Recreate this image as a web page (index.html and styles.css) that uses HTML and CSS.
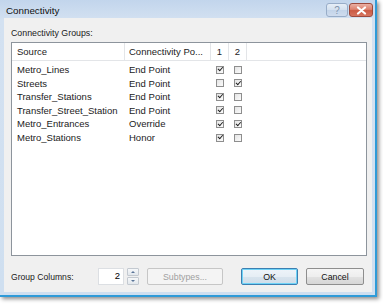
FILE: index.html
```html
<!DOCTYPE html>
<html lang="en">
<head>
    <meta charset="UTF-8">
    <title>Connectivity</title>
    <link rel="stylesheet" href="styles.css">
</head>
<body>
    <div class="window">
        <div class="titlebar">
            <span class="title">Connectivity</span>
            <div class="caption-btns">
                <div class="cap-btn help">?</div>
                <div class="cap-btn close">
                    <svg width="11" height="9" viewBox="0 0 11 9"><path d="M2 1.5 L9 7.5 M9 1.5 L2 7.5" stroke="#fff" stroke-width="2.2" stroke-linecap="round"/></svg>
                </div>
            </div>
        </div>

        <div class="client">
            <div class="group-label">Connectivity Groups:</div>

            <div class="listview">
                <div class="lv-row lv-header">
                    <div class="col c-source">Source</div>
                    <div class="col c-rule">Connectivity Po...</div>
                    <div class="col c-g">1</div>
                    <div class="col c-g">2</div>
                    <div class="col c-fill"></div>
                </div>
                <div class="lv-body">
                    <div class="lv-row">
                        <div class="col c-source">Metro_Lines</div>
                        <div class="col c-rule">End Point</div>
                        <div class="col c-g"><span class="cb checked"></span></div>
                        <div class="col c-g"><span class="cb"></span></div>
                    </div>
                    <div class="lv-row">
                        <div class="col c-source">Streets</div>
                        <div class="col c-rule">End Point</div>
                        <div class="col c-g"><span class="cb"></span></div>
                        <div class="col c-g"><span class="cb checked"></span></div>
                    </div>
                    <div class="lv-row">
                        <div class="col c-source">Transfer_Stations</div>
                        <div class="col c-rule">End Point</div>
                        <div class="col c-g"><span class="cb checked"></span></div>
                        <div class="col c-g"><span class="cb"></span></div>
                    </div>
                    <div class="lv-row">
                        <div class="col c-source">Transfer_Street_Station</div>
                        <div class="col c-rule">End Point</div>
                        <div class="col c-g"><span class="cb checked"></span></div>
                        <div class="col c-g"><span class="cb"></span></div>
                    </div>
                    <div class="lv-row">
                        <div class="col c-source">Metro_Entrances</div>
                        <div class="col c-rule">Override</div>
                        <div class="col c-g"><span class="cb checked"></span></div>
                        <div class="col c-g"><span class="cb checked"></span></div>
                    </div>
                    <div class="lv-row">
                        <div class="col c-source">Metro_Stations</div>
                        <div class="col c-rule">Honor</div>
                        <div class="col c-g"><span class="cb checked"></span></div>
                        <div class="col c-g"><span class="cb"></span></div>
                    </div>
                </div>
            </div>

            <div class="footer">
                <span class="footer-label">Group Columns:</span>
                <div class="spinner">
                    <div class="spin-value">2</div>
                    <div class="spin-btns">
                        <div class="spin-btn up"></div>
                        <div class="spin-btn down"></div>
                    </div>
                </div>
                <button class="btn btn-disabled subtypes">Subtypes...</button>
                <button class="btn btn-default ok">OK</button>
                <button class="btn cancel">Cancel</button>
            </div>
        </div>
    </div>
</body>
</html>
```

FILE: styles.css
```css
* {
    margin: 0;
    padding: 0;
    box-sizing: border-box;
    font-family: 'Liberation Sans', Arial, sans-serif;
}

body {
    background-color: #ffffff;
    width: 383px;
    height: 305px;
    overflow: hidden;
}

.window {
    width: 377px;
    height: 297px;
    background: linear-gradient(to bottom, #c2d5ec 0%, #d3e1f1 20px, #cfdff0 100%);
    border-right: 2px solid #2f9bd8;
    border-bottom: 2px solid #2f9bd8;
    box-shadow: 2px 2px 4px rgba(0, 0, 0, 0.45);
    display: flex;
    flex-direction: column;
}

.titlebar {
    height: 18px;
    display: flex;
    align-items: flex-start;
    justify-content: space-between;
    padding: 0 2px 0 6px;
}

.title {
    font-size: 9.8px;
    color: #111;
    line-height: 21px;
}

.caption-btns {
    display: flex;
    gap: 1px;
    margin-top: 3px;
}

.cap-btn {
    height: 14px;
    border-radius: 3px;
    display: flex;
    align-items: center;
    justify-content: center;
}

.help {
    width: 22px;
    border: 1px solid #98adc8;
    background: linear-gradient(to bottom, #e6eef7 0%, #d3e0ef 50%, #c3d4e9 51%, #cfdcee 100%);
    color: #8194ad;
    font-size: 10px;
}

.close {
    width: 24px;
    border: 1px solid #9c4a3d;
    background: linear-gradient(to bottom, #eab0a4 0%, #dc826f 45%, #cb5a43 55%, #d77560 100%);
}

.client {
    flex: 1;
    margin: 0 3px 3px 4px;
    background-color: #f0f0f0;
    padding: 9px 5px 0 7px;
    display: flex;
    flex-direction: column;
}

.group-label {
    font-size: 8.8px;
    color: #1a1a1a;
    line-height: 12px;
    margin-bottom: 3px;
}

.listview {
    height: 214px;
    background-color: #fff;
    border: 1px solid #8d949c;
}

.lv-row {
    display: flex;
    height: 13.6px;
    align-items: center;
    font-size: 9.5px;
    color: #1b1b1b;
}

.lv-header {
    height: 18px;
    border-bottom: 1px solid #e3e5e8;
    align-items: stretch;
}

.lv-header .col {
    display: flex;
    align-items: center;
    border-right: 1px solid #e3e5e8;
}

.lv-header .c-fill {
    flex: 1;
    border-right: none;
}

.lv-body {
    padding-top: 1.8px;
}

.col {
    white-space: nowrap;
    overflow: hidden;
}

.c-source {
    width: 113px;
    padding-left: 5px;
}

.c-rule {
    width: 86px;
    padding-left: 4px;
}

.c-g {
    width: 18px;
    display: flex;
    justify-content: center;
}

.lv-header .c-g {
    justify-content: center;
}

.cb {
    width: 8px;
    height: 8px;
    border: 1px solid #8e8e8e;
    background: linear-gradient(135deg, #e4e4e4, #fbfbfb);
    display: block;
    position: relative;
}

.cb.checked::after {
    content: "";
    position: absolute;
    left: 1.6px;
    top: -0.3px;
    width: 2px;
    height: 3.6px;
    border-right: 1.8px solid #1a1a1a;
    border-bottom: 1.8px solid #1a1a1a;
    transform: rotate(42deg);
}

.footer {
    display: flex;
    align-items: center;
    margin-top: 12px;
    height: 17px;
}

.footer-label {
    font-size: 8.6px;
    color: #1a1a1a;
    width: 87px;
}

.spinner {
    display: flex;
    gap: 3px;
    height: 17px;
}

.spin-value {
    width: 26px;
    background-color: #fff;
    border: 1px solid #dcdfe3;
    font-size: 9.5px;
    text-align: right;
    padding-right: 3px;
    line-height: 14px;
}

.spin-btns {
    width: 12px;
    display: flex;
    flex-direction: column;
    gap: 1px;
}

.spin-btn {
    flex: 1;
    border: 1px solid #c3c9d0;
    background: linear-gradient(to bottom, #f6f8fa, #e2e7ec);
    border-radius: 1px;
    display: flex;
    align-items: center;
    justify-content: center;
}

.spin-btn::after {
    content: "";
    border-left: 2.5px solid transparent;
    border-right: 2.5px solid transparent;
}

.spin-btn.up::after {
    border-bottom: 2.5px solid #5a7598;
}

.spin-btn.down::after {
    border-top: 2.5px solid #5a7598;
}

.btn {
    height: 17px;
    border: 1px solid #8e8e8e;
    border-radius: 2px;
    background: linear-gradient(to bottom, #f5f5f5 0%, #eeeeee 50%, #e2e2e2 51%, #d6d6d6 100%);
    font-size: 8.8px;
    color: #111;
}

.subtypes {
    width: 76px;
    margin-left: 8px;
    background: #f4f4f4;
    border-color: #c6c6c6;
    color: #a0a0a0;
}

.ok {
    width: 57px;
    margin-left: 18px;
    border-color: #3c7fb1;
    box-shadow: inset 0 0 0 1px #6fd3f7;
    background: linear-gradient(to bottom, #eef4f9 0%, #e6eef5 50%, #d8e4ee 51%, #cfdde9 100%);
}

.cancel {
    width: 58px;
    margin-left: 8px;
}
```
